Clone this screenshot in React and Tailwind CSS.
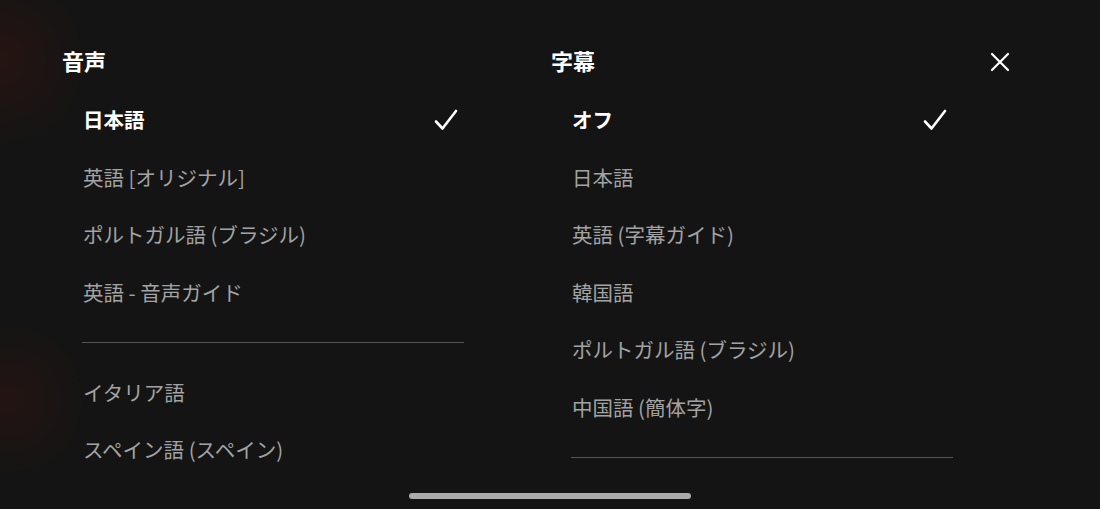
import React from "react";

const font = { fontFamily: '"Noto Sans CJK JP", "Noto Sans", sans-serif' };

function Check() {
  return (
    <svg width="24" height="22" viewBox="0 0 24 22" fill="none">
      <path d="M2 12.5 L8.5 19.5 L22 2" stroke="#fff" strokeWidth="2.6" strokeLinecap="round" strokeLinejoin="round" />
    </svg>
  );
}

function Item({ label, selected }) {
  return (
    <div className="flex h-[57.5px] items-center justify-between pl-[21px] pr-[6px]">
      <span className={selected ? "text-[20.5px] font-bold text-white" : "text-[20.5px] text-[#a3a3a3]"}>{label}</span>
      {selected && <Check />}
    </div>
  );
}

function Divider() {
  return (
    <div className="flex h-[42.5px] items-center pl-[20px]">
      <div className="h-px w-full bg-[#555555]" />
    </div>
  );
}

function Column({ title, items, after }) {
  return (
    <div className="flex w-[402px] flex-col">
      <div className="flex h-[28px] items-center text-[22px] font-bold text-white">{title}</div>
      <div className="mt-[17px] flex flex-col">
        {items.map((it, i) => (
          <Item key={i} label={it} selected={i === 0} />
        ))}
        <Divider />
        {after.map((it, i) => (
          <Item key={"a" + i} label={it} />
        ))}
      </div>
    </div>
  );
}

export default function App() {
  return (
    <div
      style={font}
      className="relative h-[509px] w-[1100px] overflow-hidden bg-[#141414] bg-[radial-gradient(circle_at_0px_60px,rgba(70,20,15,0.35),transparent_90px),radial-gradient(circle_at_10px_400px,rgba(70,20,15,0.3),transparent_80px)]"
    >
      <div className="flex pl-[62px] pt-[46px]">
        <Column
          title="音声"
          items={["日本語", "英語 [オリジナル]", "ポルトガル語 (ブラジル)", "英語 - 音声ガイド"]}
          after={["イタリア語", "スペイン語 (スペイン)"]}
        />
        <div className="w-[87px]" />
        <Column
          title="字幕"
          items={["オフ", "日本語", "英語 (字幕ガイド)", "韓国語", "ポルトガル語 (ブラジル)", "中国語 (簡体字)"]}
          after={[]}
        />
        <div className="ml-[37px] flex h-[32px] items-center">
          <svg width="20" height="20" viewBox="0 0 20 20">
            <path d="M2 2 L18 18 M18 2 L2 18" stroke="#fff" strokeWidth="2.2" strokeLinecap="round" />
          </svg>
        </div>
      </div>
      <div className="absolute bottom-[10px] left-[409px] h-[6px] w-[282px] rounded-full bg-[#aaaaaa]" />
    </div>
  );
}
